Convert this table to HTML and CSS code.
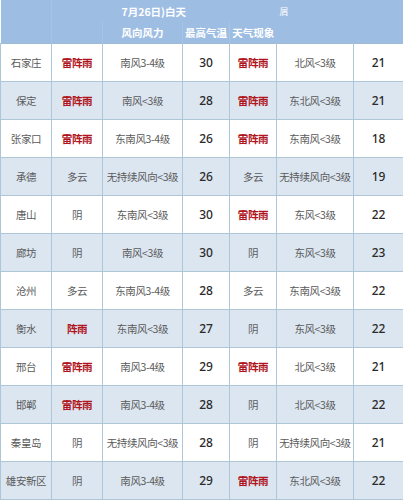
FILE: index.html
```html
<!DOCTYPE html>
<html lang="zh">
<head>
<meta charset="utf-8">
<link rel="stylesheet" href="styles.css">
</head>
<body>
<table class="wx">
  <colgroup>
    <col class="c1"><col class="c2"><col class="c3"><col class="c4"><col class="c5"><col class="c6"><col class="c7">
  </colgroup>
  <thead>
    <tr class="h1">
      <th class="hb"></th><th></th><th colspan="2" class="date">7月26日)白天</th><th></th><th class="cut">屑</th><th></th>
    </tr>
    <tr class="h2">
      <th class="hb"></th><th></th><th class="hs">风向风力</th><th class="hs">最高气温</th><th class="hs">天气现象</th><th></th><th></th>
    </tr>
  </thead>
  <tbody>
    <tr><td>石家庄</td><td class="red">雷阵雨</td><td>南风3-4级</td><td class="num">30</td><td class="red">雷阵雨</td><td>北风&lt;3级</td><td class="num">21</td></tr>
    <tr><td>保定</td><td class="red">雷阵雨</td><td>南风&lt;3级</td><td class="num">28</td><td class="red">雷阵雨</td><td>东北风&lt;3级</td><td class="num">21</td></tr>
    <tr><td>张家口</td><td class="red">雷阵雨</td><td>东南风3-4级</td><td class="num">26</td><td class="red">雷阵雨</td><td>东南风&lt;3级</td><td class="num">18</td></tr>
    <tr><td>承德</td><td>多云</td><td>无持续风向&lt;3级</td><td class="num">26</td><td>多云</td><td>无持续风向&lt;3级</td><td class="num">19</td></tr>
    <tr><td>唐山</td><td>阴</td><td>东南风&lt;3级</td><td class="num">30</td><td class="red">雷阵雨</td><td>东风&lt;3级</td><td class="num">22</td></tr>
    <tr><td>廊坊</td><td>阴</td><td>南风&lt;3级</td><td class="num">30</td><td>阴</td><td>东风&lt;3级</td><td class="num">23</td></tr>
    <tr><td>沧州</td><td>多云</td><td>东南风3-4级</td><td class="num">28</td><td>多云</td><td>东南风&lt;3级</td><td class="num">22</td></tr>
    <tr><td>衡水</td><td class="red">阵雨</td><td>东南风&lt;3级</td><td class="num">27</td><td>阴</td><td>东风&lt;3级</td><td class="num">22</td></tr>
    <tr><td>邢台</td><td class="red">雷阵雨</td><td>南风3-4级</td><td class="num">29</td><td class="red">雷阵雨</td><td>北风&lt;3级</td><td class="num">21</td></tr>
    <tr><td>邯郸</td><td class="red">雷阵雨</td><td>南风3-4级</td><td class="num">28</td><td>阴</td><td>北风&lt;3级</td><td class="num">22</td></tr>
    <tr><td>秦皇岛</td><td>阴</td><td>无持续风向&lt;3级</td><td class="num">28</td><td>阴</td><td>无持续风向&lt;3级</td><td class="num">21</td></tr>
    <tr><td>雄安新区</td><td>阴</td><td>南风3-4级</td><td class="num">29</td><td class="red">雷阵雨</td><td>东北风&lt;3级</td><td class="num">22</td></tr>
  </tbody>
</table>
</body>
</html>
```

FILE: styles.css
```css
html, body {
  margin: 0;
  padding: 0;
  background: #ffffff;
  overflow: hidden;
}

.wx {
  width: 403px;
  border-collapse: collapse;
  table-layout: fixed;
  font-family: "Noto Sans CJK SC", "Noto Sans", sans-serif;
  font-size: 10.5px;
  letter-spacing: -0.4px;
  color: #5a5a5a;
}

.c1 { width: 51px; }
.c2 { width: 51px; }
.c3 { width: 80px; }
.c4 { width: 47px; }
.c5 { width: 47px; }
.c6 { width: 77px; }
.c7 { width: 50px; }

thead th {
  background: #9ebde2;
  color: #ffffff;
  font-weight: 700;
  font-size: 10.5px;
  letter-spacing: 0;
  padding: 0;
  border: none;
  white-space: nowrap;
  overflow: hidden;
}

.h1 th { height: 22px; }
.h2 th { height: 21px; }

.hb { border-right: 1px solid #a6c3e5; }

.date {
  text-align: left;
  padding-left: 19px;
}

.cut {
  text-align: left;
  padding-left: 3px;
  font-size: 9px;
  font-weight: 400;
}

.hs {
  text-align: center;
  border-left: 1px solid #a8c4e5;
}

tbody td {
  height: 37px;
  padding: 0;
  text-align: center;
  border: 1px solid #aec7d8;
  white-space: nowrap;
  overflow: hidden;
}

tbody tr:first-child td {
  border-top-color: #9fbbd0;
}

tbody tr:nth-child(even) td {
  background: #dce6f1;
}

.red {
  color: #b0141c;
  font-weight: 700;
}

.num {
  color: #2a2a2a;
  font-family: "Noto Sans", sans-serif;
  font-size: 12px;
  letter-spacing: 0;
  font-weight: 500;
}
```
